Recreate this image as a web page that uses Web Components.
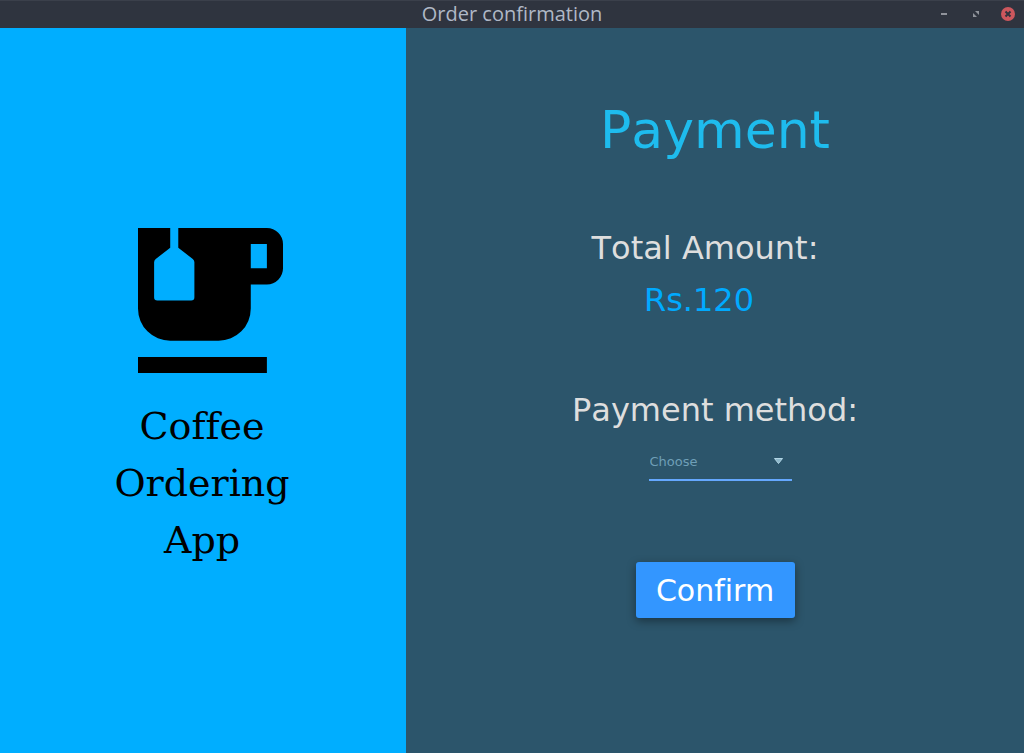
<!DOCTYPE html>
<html lang="en">
<head>
<meta charset="utf-8">
<title>Order confirmation</title>
<style>
  html, body { height: 100%; margin: 0; }
  body { font-family: "DejaVu Sans", sans-serif; background: #2c556b; }
</style>
</head>
<body>
<order-window>
  <window-bar slot="bar">Order confirmation</window-bar>
  <brand-panel slot="brand">Coffee<br>Ordering<br>App</brand-panel>
  <payment-form slot="form" amount="Rs.120"></payment-form>
</order-window>

<template id="order-window">
  <style>
    :host { display: flex; flex-direction: column; min-height: 100vh; }
    main { flex: 1; display: grid; grid-template-columns: 406fr 618fr; font-variant-ligatures: none; }
  </style>
  <slot name="bar"></slot>
  <main><slot name="brand"></slot><slot name="form"></slot></main>
</template>

<template id="window-bar">
  <style>
    :host { display: grid; grid-template-columns: 1fr auto 1fr; align-items: center; height: 28px;
      background: #2f343f; box-shadow: inset 0 1px #3b404b; color: #afb8c6; }
    h1 { grid-column: 2; margin: 0; font: 500 20px/26px "Open Sans", "Noto Sans", sans-serif; }
    nav { display: flex; justify-content: flex-end; gap: 16px; padding-right: 8px; }
    button { width: 16px; height: 16px; padding: 0; border: 0; background: none; }
    svg { display: block; }
  </style>
  <h1><slot></slot></h1>
  <nav aria-label="Window">
    <button aria-label="Minimise"><svg width="16" height="16"><path d="M5 7h6v2H5z" fill="#90939b"/></svg></button>
    <button aria-label="Maximise"><svg width="16" height="16"><path d="M7 5h4v4zM5 7v4h4z" fill="#90939b"/></svg></button>
    <button aria-label="Close"><svg width="16" height="16"><circle cx="8" cy="8" r="7" fill="#cc575d"/><path d="M5.5 5.5l5 5m0-5l-5 5" stroke="#2f343f" stroke-width="2"/></svg></button>
  </nav>
</template>

<template id="brand-panel">
  <style>
    :host { display: flex; flex-direction: column; align-items: center; gap: 25px; box-sizing: border-box;
      padding: 200px 18px 32px 16px; background: #00aeff; color: #000; }
    svg { width: 145px; height: 145px; margin-left: 16px; }
    p { margin: 0; font-family: "DejaVu Serif", serif; font-size: 38px; line-height: 57px; text-align: center; }
  </style>
  <svg viewBox="0 0 18 18" aria-hidden="true">
    <path fill-rule="evenodd" d="M0 0H4V2.45L2.2 3.85Q2 4 2 4.25V8.6Q2 9 2.4 9H6.6Q7 9 7 8.6V4.25Q7 4 6.8 3.85L5 2.45V0H16a2 2 0 0 1 2 2V5a2 2 0 0 1-2 2H14V10a4 4 0 0 1-4 4H4a4 4 0 0 1-4-4ZM14 2V5H16V2ZM0 16H16V18H0Z"/>
  </svg>
  <p><slot></slot></p>
</template>

<template id="payment-form">
  <style>
    :host { display: block; background: #2c556b; color: #dedede; }
    form { display: flex; flex-direction: column; align-items: center; padding: 72px 16px 32px; text-align: center; font-kerning: none; }
    h2 { margin: 0 0 62px; font-size: 52px; line-height: 60px; font-weight: 400; color: #1ebcee; }
    .amount, .method { font-size: 32px; line-height: 52px; }
    .amount { margin: 0 0 58px; padding-right: 20px; }
    output { display: block; padding-right: 12px; color: #00aaff; }
    .method { display: flex; flex-direction: column; align-items: center; gap: 6px; margin-bottom: 81px; }
    button { min-width: 159px; height: 56px; padding: 2px 16px 0; border: 0; border-radius: 3px; background: #3396ff; color: #fff;
      font-family: inherit; font-size: 30px; line-height: 54px; font-variant-ligatures: none;
      box-shadow: 0 3px 10px rgba(0, 0, 0, .4); }
  </style>
  <form>
    <h2>Payment</h2>
    <div class="amount"><label for="total">Total Amount:</label><output id="total"></output></div>
    <div class="method"><span>Payment method:</span><method-picker label="Payment method"></method-picker></div>
    <button type="button">Confirm</button>
  </form>
</template>

<template id="method-picker">
  <style>
    :host { display: block; position: relative; width: 143px; margin-left: 10px; }
    select { display: block; width: 100%; height: 39px; margin: 0; padding: 2px 32px 0 1px; border: 0; border-bottom: 2px solid #65a8ff;
      border-radius: 0; appearance: none; background: none; color: #6f9fb7; font: 13px/20px "DejaVu Sans", sans-serif; }
    svg { position: absolute; right: 8px; top: 16px; pointer-events: none; }
  </style>
  <select><option>Choose</option></select>
  <svg width="11" height="7" aria-hidden="true"><path d="M1.500 .5h8L5.500 5.500z" fill="#8db8cb" stroke="#b2d5e5"/></svg>
</template>

<script>
  class TemplateElement extends HTMLElement {
    constructor() {
      super();
      const template = document.getElementById(this.localName);
      this.attachShadow({ mode: "open" }).append(template.content.cloneNode(true));
    }
  }
  customElements.define("order-window", class extends TemplateElement {});
  customElements.define("window-bar", class extends TemplateElement {});
  customElements.define("brand-panel", class extends TemplateElement {});
  customElements.define("method-picker", class extends TemplateElement {
    connectedCallback() {
      this.shadowRoot.querySelector("select").setAttribute("aria-label", this.getAttribute("label"));
    }
  });
  customElements.define("payment-form", class extends TemplateElement {
    connectedCallback() {
      this.shadowRoot.querySelector("output").textContent = this.getAttribute("amount");
    }
  });
</script>
</body>
</html>
